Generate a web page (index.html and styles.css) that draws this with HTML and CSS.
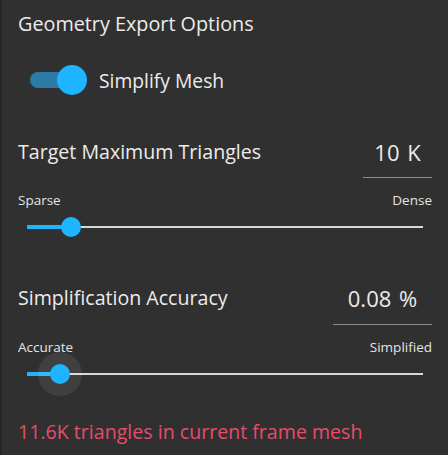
FILE: index.html
```html
<!DOCTYPE html>
<html>
<head>
<meta charset="utf-8">
<link rel="stylesheet" href="styles.css">
</head>
<body>
<div class="panel">
  <div class="title">Geometry Export Options</div>
  <div class="toggle-row">
    <span class="switch"><span class="switch-track"></span><span class="switch-knob"></span></span>
    <span class="toggle-label">Simplify Mesh</span>
  </div>

  <div class="value-row first">
    <span class="label">Target Maximum Triangles</span>
    <span class="value value-tri">10 K</span>
  </div>
  <div class="range-labels"><span>Sparse</span><span>Dense</span></div>
  <div class="slider">
    <div class="rail"></div>
    <div class="fill" style="width: 44px"></div>
    <div class="thumb" style="left: 44px"></div>
  </div>

  <div class="value-row second">
    <span class="label">Simplification Accuracy</span>
    <span class="value value-acc">0.08 %</span>
  </div>
  <div class="range-labels"><span>Accurate</span><span>Simplified</span></div>
  <div class="slider">
    <div class="rail"></div>
    <div class="fill" style="width: 33px"></div>
    <div class="halo" style="left: 33px"></div>
    <div class="thumb" style="left: 33px"></div>
  </div>

  <div class="warning">11.6K triangles in current frame mesh</div>
</div>
</body>
</html>
```

FILE: styles.css
```css
html, body {
  margin: 0;
  padding: 0;
  background: #303030;
}
body {
  width: 448px;
  height: 455px;
  overflow: hidden;
  font-family: "Open Sans", "Noto Sans", sans-serif;
  color: #ececec;
}
.panel {
  box-sizing: border-box;
  height: 455px;
  border-left: 2px solid #262626;
  padding: 0 16px 0 16px;
}
.title {
  height: 48px;
  line-height: 48px;
  font-size: 19.8px;
}
.toggle-row {
  margin-top: 16px;
  height: 32px;
  display: flex;
  align-items: center;
  padding-left: 12px;
}
.switch {
  position: relative;
  width: 58px;
  height: 32px;
  flex: none;
}
.switch-track {
  position: absolute;
  left: 0;
  top: 8px;
  width: 52px;
  height: 16px;
  border-radius: 8px;
  background: #2a7ca6;
}
.switch-knob {
  position: absolute;
  left: 27px;
  top: 1px;
  width: 30px;
  height: 30px;
  border-radius: 50%;
  background: #1eb4ff;
}
.toggle-label {
  margin-left: 11px;
  font-size: 19.3px;
}
.value-row {
  display: flex;
  justify-content: space-between;
  align-items: flex-start;
}
.value-row.first { margin-top: 40px; }
.value-row.second { margin-top: 43px; }
.label {
  line-height: 32px;
  font-size: 19.6px;
}
.label-acc { font-size: 19.3px; }
.value {
  line-height: 32px;
  font-size: 22px;
  word-spacing: 2px;
  text-align: center;
  border-bottom: 1px solid #8a8a8a;
}
.value-tri { width: 69px; padding-bottom: 9px; }
.value-acc { width: 99px; padding-bottom: 10px; }
.range-labels {
  margin-top: 14px;
  display: flex;
  justify-content: space-between;
  line-height: 16px;
  font-size: 13.5px;
  color: #e4e4e4;
}
.slider {
  position: relative;
  margin: 7px 9px 0 9px;
  height: 24px;
}
.rail {
  position: absolute;
  left: 0;
  right: 0;
  top: 11px;
  height: 2px;
  background: #d8d8d8;
}
.fill {
  position: absolute;
  left: 0;
  top: 10px;
  height: 4px;
  background: #1eb4ff;
}
.thumb {
  position: absolute;
  top: 2px;
  width: 20px;
  height: 20px;
  margin-left: -10px;
  border-radius: 50%;
  background: #1eb4ff;
}
.halo {
  position: absolute;
  top: -10px;
  width: 44px;
  height: 44px;
  margin-left: -22px;
  border-radius: 50%;
  background: rgba(255, 255, 255, 0.08);
}
.warning {
  margin-top: 34px;
  line-height: 24px;
  font-size: 19.6px;
  color: #e64c6c;
}
```
